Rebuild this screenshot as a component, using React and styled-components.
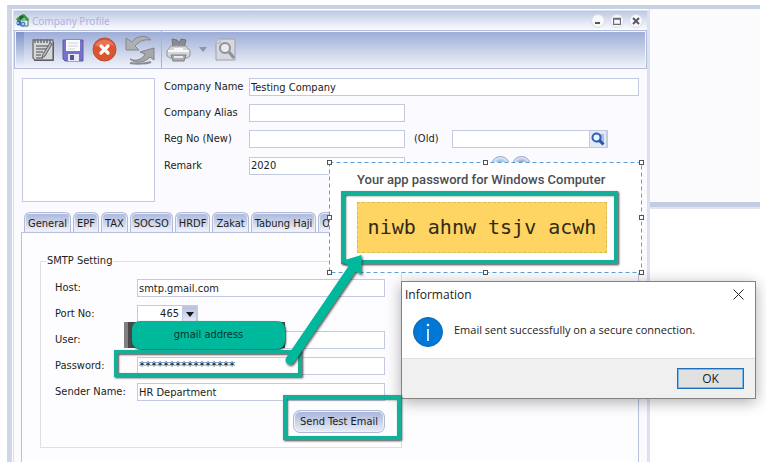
import React from "react";
import styled, { createGlobalStyle } from "styled-components";

const ui = `"DejaVu Sans Condensed", "DejaVu Sans", sans-serif`;
const line = "#c3c9e0";
const teal = "#12b099";

const GlobalStyle = createGlobalStyle`
  *, *::before, *::after { box-sizing: border-box; }
  body { margin: 0; background: #fff; color: #1c1c22; font: 11px/16px ${ui}; }
  button, input, select { font: inherit; color: inherit; margin: 0; }
`;

const Page = styled.div`
  position: relative;
  display: flex;
  min-height: 100vh;
  padding: 5px 6px 8px 7px;
  overflow: hidden;
`;

const Workspace = styled.main`
  flex: 1;
  display: grid;
  grid-template-columns: minmax(0, 1fr) 110px;
  border-top: 4px solid #c8d1e1;
  border-left: 5px solid #cfd6e8;
`;

const Window = styled.section`
  display: flex;
  flex-direction: column;
  border: 1px solid #fff;
  border-right: 2px solid #dde2f1;
  border-bottom: 0;
`;

const WindowFrame = styled.div`
  flex: 1;
  display: flex;
  flex-direction: column;
  border: 1px solid #dbe0ef;
  border-bottom: 0;
  background: #fafaff;
`;

const TitleBar = styled.header`
  display: flex;
  align-items: center;
  gap: 3px;
  height: 19px;
  padding: 0 2px;
  background: linear-gradient(#bdc8e3, #d9e0f0 45%, #fcfcff);
`;

const Title = styled.h1`
  flex: 1;
  margin: 0;
  font: 11px/16px "Noto Sans", sans-serif;
  font-size: 10px;
  color: #aeb2dc;
`;

const RoundButton = styled.button`
  display: grid;
  place-items: center;
  width: 14px;
  height: 14px;
  margin-right: 2px;
  padding: 0;
  border: 1px solid #dadde6;
  border-radius: 50%;
  background: #f8f8fc;
`;

const Toolbar = styled.div`
  display: flex;
  align-items: stretch;
  height: 39px;
  border: 1px solid #b3bcdd;
  background: linear-gradient(#9aabd6, #c6cfe6 50%, #f1f3fa);
  box-shadow: inset 0 0 0 1px #f2f4fb;
`;

const Grip = styled.div`
  width: 8px;
  margin: 1px 4px 1px 1px;
  background: linear-gradient(#7d93cc, #b2bfdf 50%, #edf0f8);
`;

const ToolGroup = styled.div`
  display: flex;
  align-items: center;
  gap: 8px;
  padding: 0 6px 0 4px;
  border-right: ${(p) => (p.$last ? "0" : "1px solid #a9b3d3")};
`;

const ToolButton = styled.button`
  display: grid;
  place-items: center;
  padding: 0;
  border: 0;
  background: none;
`;

const Profile = styled.div`
  display: grid;
  grid-template-columns: 133px minmax(0, 1fr);
  gap: 9px;
  padding: 9px 8px 0;
`;

const LogoBox = styled.div`
  height: 124px;
  border: 1px solid ${line};
  background: #fff;
`;

const FormRows = styled.div`
  display: flex;
  flex-direction: column;
  gap: 8px;
`;

const FormRow = styled.div`
  display: grid;
  grid-template-columns: ${(p) => p.$columns};
  align-items: center;
`;

const Label = styled.label`
  padding-left: ${(p) => p.$indent || 0}px;
  white-space: nowrap;
`;

const Field = styled.input`
  width: 100%;
  min-width: 0;
  height: 18px;
  padding: 0 1px;
  border: 1px solid ${line};
  border-radius: 0;
  background: #fff;
  outline: 0;
`;

const SecretField = styled(Field)`
  font: 12px/16px "DejaVu Sans", sans-serif;
`;

const Lookup = styled.div`
  display: flex;
  height: 18px;
  border: 1px solid ${line};
  background: #fff;
`;

const LookupInput = styled.input`
  flex: 1;
  min-width: 0;
  padding: 0 1px;
  border: 0;
  background: none;
  outline: 0;
`;

const LookupButton = styled.button`
  display: grid;
  place-items: center;
  width: 18px;
  padding: 0;
  border: 1px solid ${line};
  border-width: 0 1px;
  background: #e3e9f6;
`;

const RoundTools = styled.div`
  display: flex;
  gap: 2px;
  padding-left: 86px;
`;

const RoundTool = styled.button`
  width: 19px;
  height: 19px;
  padding: 0;
  border: 1px solid #98a0ca;
  border-radius: 50%;
  background: radial-gradient(circle, ${(p) => p.$tone}, #e7ecf8 70%);
`;

const Tabs = styled.div`
  display: flex;
  gap: 2px;
  margin: 10px 8px 0 10px;
`;

const Tab = styled.button`
  height: 20px;
  padding: 3px 3px 0;
  border: 1px solid #b3bbda;
  border-bottom: 0;
  border-radius: 6px 6px 0 0;
  background: linear-gradient(#a9b6da, #ccd4e9 50%, #f5f6fc);
  box-shadow: inset 0 0 0 1px #e9edf8;
  white-space: nowrap;
`;

const TabPanel = styled.div`
  flex: 1;
  margin: 0 8px 0 7px;
  padding: 20px 18px 0;
  border: 1px solid #b9c1de;
  border-bottom: 0;
  background: #fdfdff;
`;

const SmtpGroup = styled.fieldset`
  width: 362px;
  margin: 0;
  padding: 10px 16px 14px 14px;
  border: 1px solid #dddfe5;
`;

const Legend = styled.legend`
  margin-left: -9px;
  padding: 0 1px;
`;

const PortBox = styled.div`
  display: grid;
  width: 61px;
`;

const PortSelect = styled.select`
  grid-area: 1 / 1;
  height: 18px;
  padding: 0 18px 0 0;
  border: 1px solid ${line};
  border-radius: 0;
  background: #fff;
  appearance: none;
  text-align: right;
  text-align-last: right;
`;

const PortArrow = styled.span`
  grid-area: 1 / 1;
  justify-self: end;
  align-self: center;
  display: grid;
  place-items: center;
  width: 15px;
  height: 16px;
  margin-right: 1px;
  border: 1px solid ${line};
  background: linear-gradient(#b5c0e0, #e6eaf6);
  pointer-events: none;
`;

const SendRow = styled.div`
  display: flex;
  justify-content: flex-end;
  margin-top: 9px;
`;

const SendButton = styled.button`
  width: 92px;
  height: 23px;
  padding: 0;
  border: 1px solid #b1bad9;
  border-radius: 7px;
  background: linear-gradient(#a4b3da, #c9d2e9 50%, #e9edf7);
  box-shadow: inset 0 0 0 1px #f0f2fa;
  white-space: nowrap;
`;

const SidePane = styled.aside`
  display: flex;
  flex-direction: column;
`;

const SideTop = styled.div`
  height: 198px;
  background: #fbfbfe;
  border-bottom: 5px solid #c2cde4;
  border-bottom-style: solid;
  box-shadow: 0 2px 0 #dfe4f0;
`;

/* Annotations float freely over the window. */
const Outline = styled.div`
  position: absolute;
  left: ${(p) => p.$x}px;
  top: ${(p) => p.$y}px;
  width: ${(p) => p.$w}px;
  height: ${(p) => p.$h}px;
  border: ${(p) => p.$thick || 4}px solid ${teal};
  box-shadow: 1px 1px 2px #444, inset 1px 1px 2px #555;
  pointer-events: none;
`;

const Redaction = styled.div`
  position: absolute;
  left: 124px;
  top: 322px;
  width: 161px;
  height: 26px;
  border-left: 4px solid #808080;
  background: #484848;
`;

const Callout = styled.div`
  position: absolute;
  left: 132px;
  top: 321px;
  width: 153px;
  height: 28px;
  border-radius: 8px;
  background: #00b89c;
  box-shadow: 1px 1px 2px #333;
  color: #06342c;
  font: 12px/28px "DejaVu Sans Condensed", sans-serif;
  font-size: 11px;
  text-align: center;
  -webkit-text-stroke: 0;
`;

const PasswordCard = styled.section`
  position: absolute;
  left: 329px;
  top: 162px;
  width: 313px;
  height: 111px;
  padding: 9px 28px;
  background: #fff;
`;

const CardTitle = styled.h2`
  margin: 0;
  font: 500 12px/18px Roboto, sans-serif;
  font-size: 13px;
  color: #4b4d50;
  white-space: nowrap;
`;

const AppPassword = styled.div`
  width: 250px;
  height: 51px;
  margin-top: 13px;
  border: 1px dashed #d8bb58;
  background: #fed463;
  color: #2f2a18;
  font: 20px/49px "DejaVu Sans Mono", monospace;
  text-align: center;
  white-space: nowrap;
`;

const Selection = styled.svg`
  position: absolute;
  left: 0;
  top: 0;
  overflow: visible;
  pointer-events: none;
`;

const Dialog = styled.section`
  position: absolute;
  left: 401px;
  top: 281px;
  width: 355px;
  display: flex;
  flex-direction: column;
  border: 1px solid #828282;
  background: #fff;
  box-shadow: 0 3px 14px rgba(0, 0, 0, 0.32);
  font: 12px/16px "Open Sans", sans-serif;
  color: #222;
`;

const DialogHead = styled.header`
  display: flex;
  align-items: center;
  justify-content: space-between;
  height: 25px;
  padding: 0 11px 0 3px;
`;

const DialogTitle = styled.h2`
  margin: 0;
  font: inherit;
`;

const PlainButton = styled.button`
  display: grid;
  padding: 0;
  border: 0;
  background: none;
`;

const DialogBody = styled.div`
  display: flex;
  gap: 11px;
  height: 51px;
  padding: 10px 11px 0;
`;

const DialogText = styled.p`
  margin: 5px 0 0;
  font-size: 11px;
  white-space: nowrap;
`;

const DialogFoot = styled.footer`
  display: flex;
  justify-content: flex-end;
  padding: 9px 11px;
  border-top: 1px solid #dfdfdf;
  background: #f0f0f0;
`;

const OkButton = styled.button`
  width: 67px;
  height: 21px;
  padding: 0;
  border: 1px solid #1c6fb8;
  background: #e1e1e1;
  box-shadow: inset 0 0 0 1px #7bbcec;
  line-height: 16px;
`;

const HomeIcon = () => (
  <svg width="13" height="13" viewBox="0 0 13 13" aria-hidden="true">
    <path d="M3 6h9v6H5z" fill="#e9efe9" stroke="#4a7a4a" />
    <path d="M0 5 5 1l3-1 5 5-1 2-4-3-6 4z" fill="#2f9a37" />
    <path d="M3 3 6 1l2 2-4 3z" fill="#176a25" />
    <circle cx="3" cy="9" r="2.5" fill="#2f66bd" />
    <circle cx="7" cy="10" r="2.5" fill="#4b8bd6" />
    <path d="M2 8v2M7 9v2" stroke="#fff" />
  </svg>
);

const NoteIcon = () => (
  <svg width="22" height="24" viewBox="0 0 22 24" aria-hidden="true">
    <path d="M1 2h20v20H3l-2-2z" fill="#d5d6d7" stroke="#77797d" strokeWidth="1.5" />
    <path d="M2 22.5h19.5V4" fill="none" stroke="#5c5e63" />
    <path d="M3 1v4M6 1v4M9 1v4M12 1v4M15 1v4M18 1v4" stroke="#696b70" strokeWidth="1.5" />
    <path d="M4 8h12M4 11h10M4 14h7M4 17h5M4 20h7" stroke="#77797c" strokeWidth="1.5" />
    <path d="m18 5 2 1-7 12-3 2 1-4z" fill="#b4b5b7" stroke="#616267" />
  </svg>
);

const SaveIcon = () => (
  <svg width="22" height="24" viewBox="0 0 22 24" aria-hidden="true">
    <path d="M1 2h20v21H3l-2-2z" fill="#7672c8" stroke="#5e5aaf" />
    <path d="M4 2h14v11H4z" fill="#fafaff" />
    <path d="M6 5h10M6 8h10M6 11h7" stroke="#d1d2da" />
    <path d="M6 16h11v7H6z" fill="#e8e8f6" />
    <path d="M8 17h4v5H8z" fill="#5551a7" />
  </svg>
);

const CancelIcon = () => (
  <svg width="25" height="25" viewBox="0 0 25 25" aria-hidden="true">
    <circle cx="12.5" cy="12.5" r="11.5" fill="#dc5330" stroke="#b9503c" />
    <path d="M3 9c2-8 17-8 19 0-6-3-12 2-19 0" fill="#f29373" opacity=".55" />
    <path d="m9 9 7 7m0-7-7 7" stroke="#fff" strokeWidth="3.2" strokeLinecap="round" />
  </svg>
);

const RefreshIcon = () => (
  <svg width="30" height="30" viewBox="0 0 30 30" aria-hidden="true">
    <path
      d="M26 5C21-1 11 1 7 7L1 3v12h13l-4-4c4-5 10-7 16-6z"
      fill="#aeb0b3"
      stroke="#84878c"
    />
    <path
      d="M5 24c6 3 13 0 15-5l-5-2 14-4v12l-4-3c-5 6-15 7-20 2z"
      fill="#a5a7aa"
      stroke="#808388"
    />
    <path d="M5 28c6 1 16 1 21-1" fill="none" stroke="#898c92" strokeWidth="2" />
  </svg>
);

const PrinterIcon = () => (
  <svg width="25" height="25" viewBox="0 0 25 25" aria-hidden="true">
    <path d="m7 11-1-9 5 1 2 3 2-4 5 1-2 8z" fill="#898b90" stroke="#6f7277" />
    <path d="M5 9h15l4 5v5l-3 2H4l-3-2v-5z" fill="#d3d5d8" stroke="#95989d" />
    <path d="M2 14h21M8 12h9" stroke="#f8f8f8" strokeWidth="2" />
    <path d="M5 18h15l-2 6H7z" fill="#aaacb0" stroke="#7d8085" />
    <path d="M8 20h9" stroke="#e9e9eb" strokeWidth="2" />
  </svg>
);

const PreviewIcon = () => (
  <svg width="21" height="25" viewBox="0 0 21 25" aria-hidden="true">
    <path d="M5 2h15v21H1V6z" fill="#d5d8de" stroke="#9da1a9" />
    <path d="M5 2v4H1" fill="#eceef2" stroke="#a5a8b0" />
    <circle cx="10" cy="11" r="5" fill="#e8ebef" stroke="#8e9299" strokeWidth="2" />
    <path d="m14 15 5 6" stroke="#8e9299" strokeWidth="3" />
  </svg>
);

const Caret = ({ color }) => (
  <svg width="8" height="5" viewBox="0 0 8 5" aria-hidden="true">
    <path d="M0 0h8L4 5z" fill={color} />
  </svg>
);

const SearchIcon = () => (
  <svg width="16" height="16" viewBox="0 0 16 16" aria-hidden="true">
    <path d="M6 3h8v9H6z" fill="#aebbdb" />
    <circle cx="6.5" cy="6.5" r="4" fill="#eef4fe" stroke="#2c60b8" strokeWidth="2" />
    <path d="m9.5 9.5 4 4" stroke="#2455ab" strokeWidth="3" />
  </svg>
);

const tabs = ["General", "EPF", "TAX", "SOCSO", "HRDF", "Zakat", "Tabung Haji", "Office"];
const handles = [
  [0, 0], [156, 0], [312, 0], [312, 55], [312, 110], [156, 110], [0, 110], [0, 55],
];
const profileColumns = "85px 156px 1fr";
const smtpColumns = "82px minmax(0, 1fr)";

export default function App() {
  return (
    <Page>
      <GlobalStyle />
      <Workspace>
        <Window>
          <WindowFrame>
            <TitleBar>
              <HomeIcon />
              <Title>Company Profile</Title>
              <RoundButton aria-label="Minimize">
                <svg width="8" height="8"><path d="M1 6h5" stroke="#555861" strokeWidth="2" /></svg>
              </RoundButton>
              <RoundButton aria-label="Maximize">
                <svg width="8" height="8">
                  <path d="M.5 1.5h7v6h-7zM0 2h8" fill="none" stroke="#6b6e76" strokeWidth="1.3" />
                </svg>
              </RoundButton>
              <RoundButton aria-label="Close">
                <svg width="8" height="8"><path d="m1 1 6 6m0-6L1 7" stroke="#565960" strokeWidth="2" /></svg>
              </RoundButton>
            </TitleBar>
            <Toolbar>
              <Grip />
              <ToolGroup>
                <ToolButton aria-label="Edit"><NoteIcon /></ToolButton>
                <ToolButton aria-label="Save"><SaveIcon /></ToolButton>
                <ToolButton aria-label="Cancel"><CancelIcon /></ToolButton>
                <ToolButton aria-label="Refresh"><RefreshIcon /></ToolButton>
              </ToolGroup>
              <ToolGroup $last>
                <ToolButton aria-label="Print"><PrinterIcon /></ToolButton>
                <ToolButton aria-label="Print options"><Caret color="#8d94b0" /></ToolButton>
                <ToolButton aria-label="Preview"><PreviewIcon /></ToolButton>
              </ToolGroup>
            </Toolbar>
            <Profile>
              <LogoBox />
              <FormRows>
                <FormRow $columns="85px 1fr">
                  <Label htmlFor="name">Company Name</Label>
                  <Field id="name" defaultValue="Testing Company" />
                </FormRow>
                <FormRow $columns={profileColumns}>
                  <Label htmlFor="alias">Company Alias</Label>
                  <Field id="alias" />
                </FormRow>
                <FormRow $columns="85px 156px 47px 156px">
                  <Label htmlFor="regNew">Reg No (New)</Label>
                  <Field id="regNew" />
                  <Label htmlFor="regOld" $indent={9}>(Old)</Label>
                  <Lookup>
                    <LookupInput id="regOld" />
                    <LookupButton aria-label="Search"><SearchIcon /></LookupButton>
                  </Lookup>
                </FormRow>
                <FormRow $columns={profileColumns}>
                  <Label htmlFor="remark">Remark</Label>
                  <Field id="remark" defaultValue="2020" />
                  <RoundTools>
                    <RoundTool $tone="#3b9be0" aria-label="Web" />
                    <RoundTool $tone="#5c65b5" aria-label="Print remark" />
                  </RoundTools>
                </FormRow>
              </FormRows>
            </Profile>
            <Tabs role="tablist">
              {tabs.map((name) => (
                <Tab key={name} role="tab" aria-selected={name === "Office"}>{name}</Tab>
              ))}
            </Tabs>
            <TabPanel role="tabpanel">
              <SmtpGroup>
                <Legend>SMTP Setting</Legend>
                <FormRows>
                  <FormRow $columns={smtpColumns}>
                    <Label htmlFor="host">Host:</Label>
                    <Field id="host" defaultValue="smtp.gmail.com" />
                  </FormRow>
                  <FormRow $columns={smtpColumns}>
                    <Label htmlFor="port">Port No:</Label>
                    <PortBox>
                      <PortSelect id="port"><option>465</option></PortSelect>
                      <PortArrow><Caret color="#17181c" /></PortArrow>
                    </PortBox>
                  </FormRow>
                  <FormRow $columns={smtpColumns}>
                    <Label htmlFor="user">User:</Label>
                    <Field id="user" />
                  </FormRow>
                  <FormRow $columns={smtpColumns}>
                    <Label htmlFor="password">Password:</Label>
                    <SecretField id="password" defaultValue="****************" />
                  </FormRow>
                  <FormRow $columns={smtpColumns}>
                    <Label htmlFor="sender">Sender Name:</Label>
                    <Field id="sender" defaultValue="HR Department" />
                  </FormRow>
                </FormRows>
                <SendRow><SendButton>Send Test Email</SendButton></SendRow>
              </SmtpGroup>
            </TabPanel>
          </WindowFrame>
        </Window>
        <SidePane><SideTop /></SidePane>
      </Workspace>

      <Redaction />
      <Callout>gmail address</Callout>

      <PasswordCard>
        <CardTitle>Your app password for Windows Computer</CardTitle>
        <AppPassword>niwb ahnw tsjv acwh</AppPassword>
        <Selection width="313" height="111" aria-hidden="true">
          <rect x=".5" y=".5" width="312" height="110" fill="none" stroke="#5b9fd6" strokeDasharray="4 3" />
          {handles.map(([x, y]) => (
            <rect key={`${x}-${y}`} x={x - 1.5} y={y - 1.5} width="4" height="4" fill="#fff" stroke="#555" />
          ))}
        </Selection>
      </PasswordCard>

      <Dialog role="dialog" aria-labelledby="dialog-title">
        <DialogHead>
          <DialogTitle id="dialog-title">Information</DialogTitle>
          <PlainButton aria-label="Close">
            <svg width="11" height="11"><path d="m.5.5 10 10m0-10-10 10" stroke="#222" /></svg>
          </PlainButton>
        </DialogHead>
        <DialogBody>
          <svg width="30" height="30" viewBox="0 0 30 30" aria-hidden="true">
            <circle cx="15" cy="15" r="14.5" fill="#0078d7" stroke="#1165ad" />
            <path d="M15 12v12" stroke="#fff" strokeWidth="1.6" />
            <circle cx="15" cy="8" r="1.3" fill="#fff" />
          </svg>
          <DialogText>Email sent successfully on a secure connection.</DialogText>
        </DialogBody>
        <DialogFoot><OkButton>OK</OkButton></DialogFoot>
      </Dialog>

      <Outline $x={341} $y={191} $w={277} $h={73} />
      <Outline $x={114} $y={350} $w={188} $h={27} />
      <Outline $x={283} $y={395} $w={118} $h={45} />
      <Selection width="400" height="400" aria-hidden="true">
        <defs>
          <filter id="arrow-shadow" x="-20%" y="-20%" width="140%" height="140%">
            <feDropShadow dx="1" dy="1.5" stdDeviation="1" floodColor="#222" floodOpacity=".8" />
          </filter>
        </defs>
        <g filter="url(#arrow-shadow)">
          <path d="M290 360 352 269" stroke="#00b89c" strokeWidth="9" strokeLinecap="round" />
          <path d="m361.500 255-20 6 20 13.500z" fill="#00b89c" />
        </g>
      </Selection>
    </Page>
  );
}
